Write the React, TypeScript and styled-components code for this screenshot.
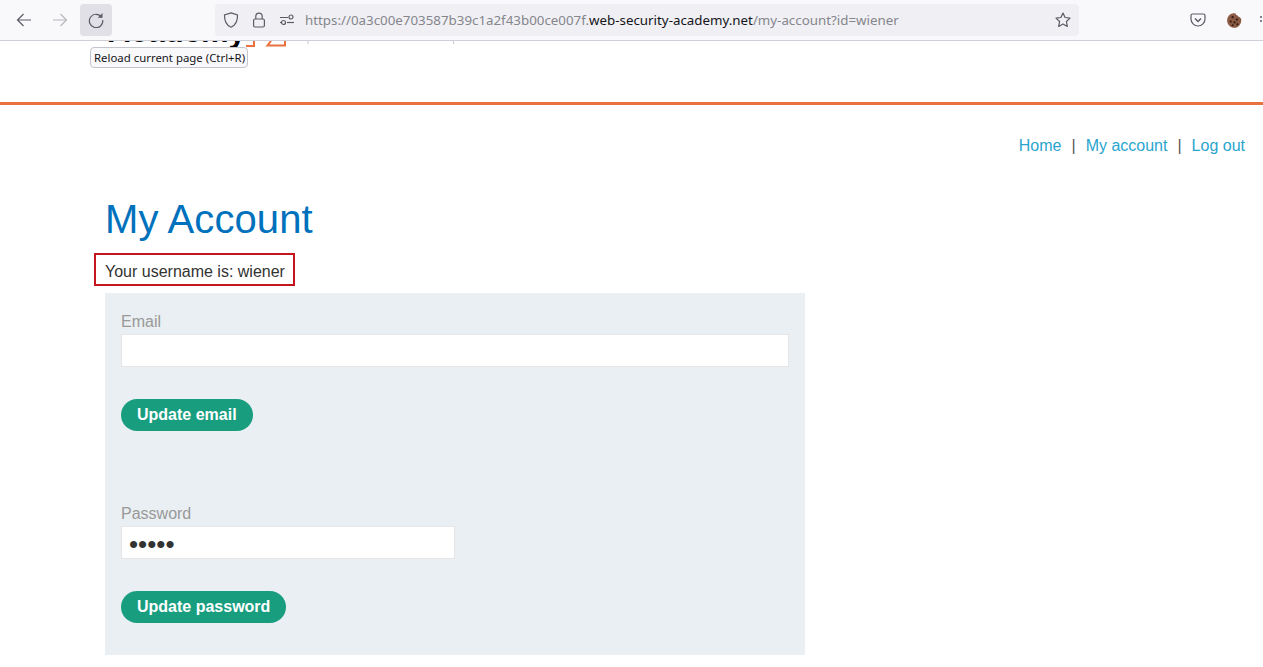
import React from "react";
import styled, { createGlobalStyle } from "styled-components";

const Global = createGlobalStyle`
  html, body { margin: 0; padding: 0; background: #fff; }
  body { font-family: "Liberation Sans", Arial, sans-serif; overflow: hidden; }
  * { box-sizing: border-box; }
`;
const Page = styled.div`position: relative; width: 1263px; height: 667px; overflow: hidden; background: #fff;`;
const Toolbar = styled.div`
  height: 41px; background: #f9f9fb; border-bottom: 1px solid #cfcfd8;
  display: flex; align-items: center; padding: 0 0 0 8px; position: relative; z-index: 2;
`;
const NavButton = styled.button<{ $active?: boolean; $dim?: boolean }>`
  flex: none; width: 32px; height: 32px; border: 0; border-radius: 4px; padding: 0; margin-right: 4px;
  background: ${(p) => (p.$active ? "#e0e0e6" : "transparent")};
  color: ${(p) => (p.$dim ? "#b8b8bd" : "#5b5b66")};
  display: flex; align-items: center; justify-content: center;
`;
const UrlBar = styled.div`
  flex: none; width: 864px; height: 32px; margin-left: 99px; background: #f0f0f4; border-radius: 4px;
  display: flex; align-items: center; padding-left: 8px; color: #5b5b66;
`;
const UrlIcon = styled.span`display: flex; width: 16px; height: 16px; margin-right: 12px; flex: none;`;
const UrlText = styled.div`
  font-family: "Noto Sans", "Open Sans", sans-serif; font-size: 13.33px; color: #85858c; white-space: nowrap;
  flex: 1; margin-left: -2px;
  b { font-weight: 400; color: #15141a; }
`;
const StarSlot = styled.span`display: flex; margin-right: 8px;`;
const Extensions = styled.div`flex: none; display: flex; align-items: center; margin-left: 101px; color: #5b5b66;`;
const ExtSlot = styled.span<{ $w: number }>`display: flex; flex: none; width: ${(p) => p.$w}px; align-items: center; justify-content: center;`;
const MenuSlot = styled.span`display: flex; flex: none; width: 11px; justify-content: flex-end;`;

const Banner = styled.div`
  height: 64px; border-bottom: 3px solid #e9703f; padding-left: 108px; overflow: hidden; display: flex; align-items: flex-start;
`;
const LogoWord = styled.div`
  font-weight: 700; font-size: 31px; line-height: 40px; margin-top: -29px; color: #000; flex: none;
`;
const LogoMark = styled.svg`flex: none;`;
const Tooltip = styled.div`
  position: absolute; left: 90px; top: 47px; width: 158px; height: 21px; z-index: 3;
  background: #f9f9fb; border: 1px solid #c4c4cc; border-radius: 4px; color: #15141a;
  font-family: "Noto Sans", sans-serif; font-size: 11.4px; line-height: 19px; padding-left: 3px; white-space: nowrap;
`;
const TopLinks = styled.nav`
  display: flex; justify-content: flex-end; align-items: center; padding: 24px 18px 0 0; height: 58px;
  font-size: 16px; line-height: 20px; color: #555;
`;
const TopLink = styled.a`color: #29a5cf; text-decoration: none;`;
const Sep = styled.span`margin: 0 10px;`;
const Content = styled.main`padding: 0 0 0 105px;`;
const Title = styled.h1`
  margin: 0; padding-top: 33px; font-weight: 400; font-size: 40px; line-height: 46px; color: #0071bc; letter-spacing: 0.1px;
`;
const UserRow = styled.div`
  position: relative; margin-top: 19px; height: 40px; font-size: 16px; line-height: 20px; color: #333332; padding-top: 1px;
`;
const Highlight = styled.div`
  position: absolute; left: -11px; top: -8px; width: 201px; height: 33px; border: 2px solid #c4161c;
`;
const Panel = styled.section`
  width: 700px; height: 362px; margin-top: -8px; background: #e9eff2; padding: 19px 16px 0;
`;
const Label = styled.label`display: block; font-size: 16px; line-height: 20px; color: #999;`;
const Field = styled.input<{ $w: number }>`
  display: block; width: ${(p) => p.$w}px; height: 33px; margin-top: 2px; background: #fff; border: 1px solid #e6e6e6;
  padding: 0 7px; font-size: 16px; color: #333332; font-family: "Liberation Sans", sans-serif; outline: none;
  &[type="password"] { font-size: 26px; padding-top: 3px; }
`;
const Action = styled.button`
  display: block; height: 32px; margin-top: 32px; border: 0; border-radius: 16px; background: #189e7f; color: #fff;
  font-family: "Liberation Sans", sans-serif; font-weight: 700; font-size: 16px; padding: 0 16px;
`;
const Gap = styled.div`height: 73px;`;

const Cookie = () => (
  <svg width="17" height="17" viewBox="0 0 18 18">
    <path d="M8 1.200c1 0 2 .2 2.400.6.1 1.200.8 1.600 1.800 1.700.2 1 .8 1.600 2 1.700.6.700 2 1.300 2 3C16.200 13 13 16.800 9 16.800 5 16.800 1.200 13.500 1.200 9 1.200 5 4 1.500 8 1.200Z" fill="#8a5a44"/>
    <circle cx="7" cy="5.500" r="1.200" fill="#2e1a12"/><circle cx="11.500" cy="8" r="1.200" fill="#2e1a12"/>
    <circle cx="5" cy="10" r="1.100" fill="#2e1a12"/><circle cx="9" cy="11" r="1.100" fill="#2e1a12"/>
    <circle cx="12" cy="13" r="1.100" fill="#2e1a12"/><circle cx="7" cy="14" r="1" fill="#2e1a12"/>
  </svg>
);

export default function App() {
  return (
    <Page>
      <Global />
      <Toolbar>
        <NavButton aria-label="Back">
          <svg width="16" height="16" viewBox="0 0 16 16" fill="none" stroke="currentColor" strokeWidth="1.200"><path d="M15 8H1.500M7.500 2 1.500 8l6 6" /></svg>
        </NavButton>
        <NavButton $dim aria-label="Forward">
          <svg width="16" height="16" viewBox="0 0 16 16" fill="none" stroke="currentColor" strokeWidth="1.200"><path d="M1 8h13.500M8.500 2l6 6-6 6" /></svg>
        </NavButton>
        <NavButton $active aria-label="Reload">
          <svg width="16" height="16" viewBox="0 0 16 16" fill="none" stroke="currentColor" strokeWidth="1.200"><path d="M13.800 5.500A6.700 6.700 0 1 0 14.700 8" /><path d="M14.500 1v4.800H9.700" fill="currentColor" stroke="none" /></svg>
        </NavButton>
        <UrlBar>
          <UrlIcon>
            <svg width="16" height="16" viewBox="0 0 16 16" fill="none" stroke="currentColor" strokeWidth="1.200"><path d="M8 .9 14.500 3c.2 5.500-1.500 10-6.500 12.200C3 13 1.300 8.500 1.500 3Z" /></svg>
          </UrlIcon>
          <UrlIcon>
            <svg width="16" height="16" viewBox="0 0 16 16" fill="none" stroke="currentColor" strokeWidth="1.200"><rect x="2.600" y="7" width="10.800" height="8" rx="1.500" /><path d="M4.800 7V4.300a3.200 3.200 0 0 1 6.400 0V7" /></svg>
          </UrlIcon>
          <UrlIcon>
            <svg width="16" height="16" viewBox="0 0 16 16" fill="none" stroke="currentColor" strokeWidth="1.200"><path d="M1 5.500h8M1 10.500h1" /><circle cx="12" cy="5" r="2" /><circle cx="4.500" cy="10.500" r="2" /><path d="M8 10.500h7" /></svg>
          </UrlIcon>
          <UrlText>https://0a3c00e703587b39c1a2f43b00ce007f.<b>web-security-academy.net</b>/my-account?id=wiener</UrlText>
          <StarSlot>
            <svg width="16" height="16" viewBox="0 0 16 16" fill="none" stroke="currentColor" strokeWidth="1.200" strokeLinejoin="round"><path d="M8 1l2.100 4.500 4.900.6-3.600 3.400.9 4.900L8 12l-4.300 2.400.9-4.900L1 6.100l4.900-.6Z" /></svg>
          </StarSlot>
        </UrlBar>
        <Extensions>
          <ExtSlot $w={36}>
            <svg width="16" height="16" viewBox="0 0 16 16" fill="none" stroke="currentColor" strokeWidth="1.200"><path d="M2.500 2h11A1.500 1.500 0 0 1 15 3.500V7a7 7 0 0 1-14 0V3.500A1.500 1.500 0 0 1 2.500 2Z" /><path d="m5 6.500 3 3 3-3" strokeWidth="1.500" /></svg>
          </ExtSlot>
          <ExtSlot $w={36}><Cookie /></ExtSlot>
          <MenuSlot>
            <svg width="4" height="12" viewBox="0 0 4 12" fill="#5b5b66"><circle cx="2" cy="3" r="1" /><circle cx="2" cy="7" r="1" /></svg>
          </MenuSlot>
        </Extensions>
      </Toolbar>
      <Banner>
        <LogoWord>Academy</LogoWord>
        <LogoMark width="215" height="8" viewBox="0 0 215 8" fill="none">
          <path d="M8 0v5H0M25 0l-3.500 4.500H39V0" stroke="#e9703f" strokeWidth="2" />
          <path d="M62 0v3M207 0l1 3" stroke="#c8c8c8" />
        </LogoMark>
      </Banner>
      <Tooltip>Reload current page (Ctrl+R)</Tooltip>
      <TopLinks>
        <TopLink href="#">Home</TopLink><Sep>|</Sep>
        <TopLink href="#">My account</TopLink><Sep>|</Sep>
        <TopLink href="#">Log out</TopLink>
      </TopLinks>
      <Content>
        <Title>My Account</Title>
        <UserRow>
          <Highlight />
          Your username is: wiener
        </UserRow>
        <Panel>
          <Label>Email</Label>
          <Field $w={668} type="email" readOnly />
          <Action>Update email</Action>
          <Gap />
          <Label>Password</Label>
          <Field $w={334} type="password" value="peter" readOnly />
          <Action>Update password</Action>
        </Panel>
      </Content>
    </Page>
  );
}
